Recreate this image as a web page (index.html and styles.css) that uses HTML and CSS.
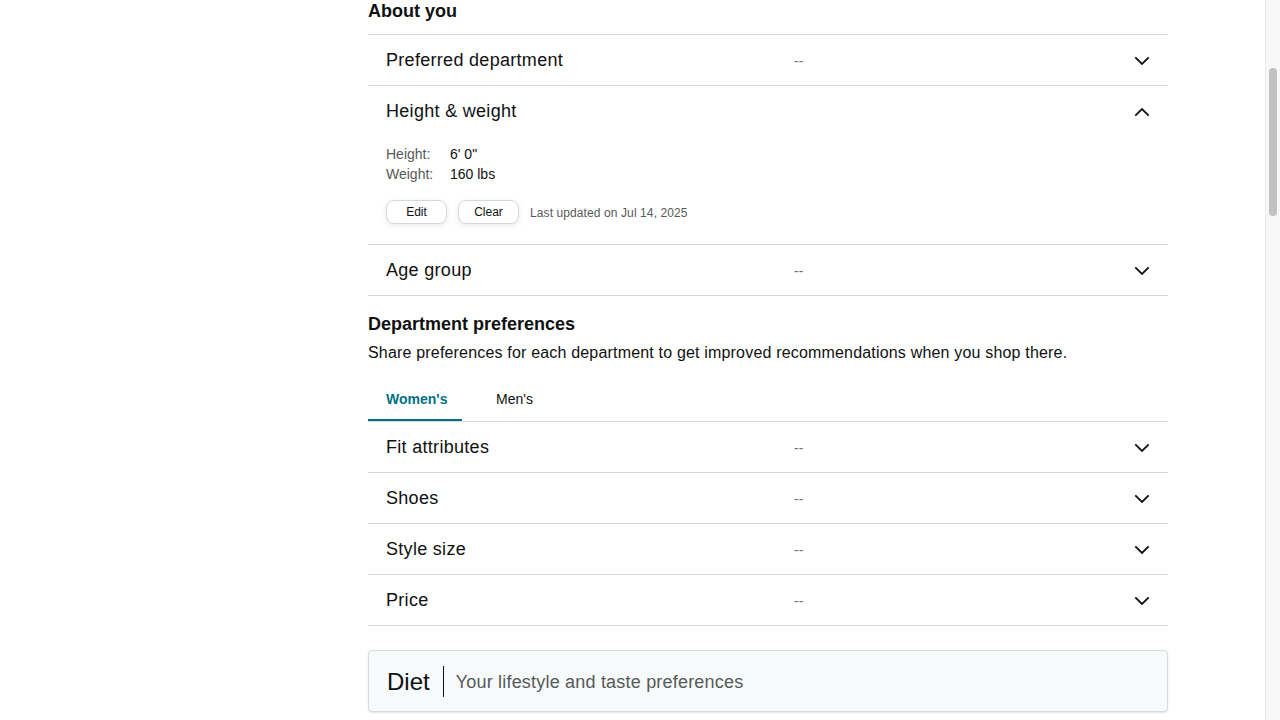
FILE: index.html
```html
<!DOCTYPE html>
<html lang="en">
<head>
<meta charset="utf-8">
<title>About you</title>
<link rel="stylesheet" href="styles.css">
</head>
<body>
<div class="page">
  <main class="main">
    <div class="column">
      <h2 class="section-title first">About you</h2>
      <div class="acc">
        <div class="acc-row">
          <div class="acc-head"><span class="acc-label">Preferred department</span><span class="acc-value">--</span>
            <svg class="chev" width="16" height="10" viewBox="0 0 16 10"><path d="M1.3 1.4 L8 8 L14.7 1.4" fill="none" stroke="#0f1111" stroke-width="1.8"/></svg></div>
        </div>
        <div class="acc-row">
          <div class="acc-head"><span class="acc-label">Height &amp; weight</span><span class="acc-value"></span>
            <svg class="chev" width="16" height="10" viewBox="0 0 16 10"><path d="M1.3 8.6 L8 2 L14.7 8.6" fill="none" stroke="#0f1111" stroke-width="1.8"/></svg></div>
          <div class="acc-body">
            <dl class="facts">
              <dt>Height:</dt><dd>6' 0"</dd>
              <dt>Weight:</dt><dd>160 lbs</dd>
            </dl>
            <div class="actions">
              <button class="btn">Edit</button>
              <button class="btn">Clear</button>
              <span class="updated">Last updated on Jul 14, 2025</span>
            </div>
          </div>
        </div>
        <div class="acc-row">
          <div class="acc-head"><span class="acc-label">Age group</span><span class="acc-value">--</span>
            <svg class="chev" width="16" height="10" viewBox="0 0 16 10"><path d="M1.3 1.4 L8 8 L14.7 1.4" fill="none" stroke="#0f1111" stroke-width="1.8"/></svg></div>
        </div>
      </div>

      <h2 class="section-title dept">Department preferences</h2>
      <p class="section-sub">Share preferences for each department to get improved recommendations when you shop there.</p>
      <div class="tabs">
        <span class="tab active">Women's</span>
        <span class="tab">Men's</span>
      </div>
      <div class="acc">
        <div class="acc-row">
          <div class="acc-head"><span class="acc-label">Fit attributes</span><span class="acc-value">--</span>
            <svg class="chev" width="16" height="10" viewBox="0 0 16 10"><path d="M1.3 1.4 L8 8 L14.7 1.4" fill="none" stroke="#0f1111" stroke-width="1.8"/></svg></div>
        </div>
        <div class="acc-row">
          <div class="acc-head"><span class="acc-label">Shoes</span><span class="acc-value">--</span>
            <svg class="chev" width="16" height="10" viewBox="0 0 16 10"><path d="M1.3 1.4 L8 8 L14.7 1.4" fill="none" stroke="#0f1111" stroke-width="1.8"/></svg></div>
        </div>
        <div class="acc-row">
          <div class="acc-head"><span class="acc-label">Style size</span><span class="acc-value">--</span>
            <svg class="chev" width="16" height="10" viewBox="0 0 16 10"><path d="M1.3 1.4 L8 8 L14.7 1.4" fill="none" stroke="#0f1111" stroke-width="1.8"/></svg></div>
        </div>
        <div class="acc-row">
          <div class="acc-head"><span class="acc-label">Price</span><span class="acc-value">--</span>
            <svg class="chev" width="16" height="10" viewBox="0 0 16 10"><path d="M1.3 1.4 L8 8 L14.7 1.4" fill="none" stroke="#0f1111" stroke-width="1.8"/></svg></div>
        </div>
      </div>

      <div class="diet">
        <span class="diet-title">Diet</span>
        <span class="diet-sep"></span>
        <span class="diet-sub">Your lifestyle and taste preferences</span>
      </div>
    </div>
  </main>
  <div class="scrollbar"><div class="thumb"></div></div>
</div>
</body>
</html>
```
FILE: styles.css
```css
* { box-sizing: border-box; }
html, body { margin: 0; padding: 0; height: 100%; overflow: hidden; background: #fff; }
body {
  font-family: "Liberation Sans", Arial, sans-serif;
  color: #0f1111;
}
.page { display: flex; height: 720px; }
.main { flex: 1; overflow: hidden; }
.column { width: 800px; margin-left: 368px; }

.section-title {
  margin: 0;
  font-size: 18px;
  line-height: 22px;
  font-weight: 700;
}
.section-title.first { padding-bottom: 12px; border-bottom: 1px solid #d5d9d9; }
.section-title.dept { margin-top: 17px; }
.section-sub { margin: 6px 0 0; font-size: 16px; line-height: 24px; letter-spacing: 0.18px; }

.acc-row { border-bottom: 1px solid #d5d9d9; }
.acc-head {
  display: flex;
  align-items: center;
  height: 50px;
  padding: 1px 18px 0;
}
.acc-label { width: 408px; font-size: 18px; letter-spacing: 0.3px; }
.acc-value { flex: 1; font-size: 14px; color: #6f7373; }
.chev { display: block; }

.acc-body { padding: 8px 18px 20px; }
.facts {
  display: grid;
  grid-template-columns: 64px auto;
  margin: 0;
  font-size: 14px;
  line-height: 20px;
}
.facts dt { color: #565959; }
.facts dd { margin: 0; }
.actions { display: flex; align-items: center; gap: 11px; margin-top: 16px; }
.btn {
  width: 61px;
  height: 24px;
  padding: 0;
  font-family: inherit;
  font-size: 12px;
  color: #0f1111;
  background: #fff;
  border: 1px solid #d5d9d9;
  border-radius: 8px;
  box-shadow: 0 2px 5px rgba(213, 217, 217, 0.5);
}
.updated { font-size: 12px; color: #565959; letter-spacing: 0.1px; padding-top: 1px; }

.tabs {
  display: flex;
  gap: 16px;
  margin-top: 11px;
  border-bottom: 1px solid #d5d9d9;
}
.tab {
  padding: 13px 18px 10px;
  font-size: 14px;
  line-height: 20px;
  border-bottom: 2px solid transparent;
}
.tab.active { width: 94px; color: #007185; font-weight: 700; border-bottom-color: #007185; }

.diet {
  display: flex;
  align-items: center;
  height: 62px;
  margin-top: 24px;
  padding: 0 18px;
  background: #f7fafa;
  border: 1px solid #d5d9d9;
  border-radius: 4px;
  box-shadow: 0 1px 2px rgba(15, 17, 17, 0.12);
}
.diet-title { font-size: 24px; padding-top: 2px; }
.diet-sep { width: 1px; height: 31px; background: #0f1111; margin: 0 12px 0 13px; }
.diet-sub { font-size: 18px; color: #565959; letter-spacing: 0.2px; padding-top: 2px; }

.scrollbar {
  width: 15px;
  background: #f8f8f8;
  border-left: 1px solid #ebebeb;
}
.thumb {
  width: 8px;
  height: 148px;
  margin: 68px 0 0 3px;
  background: #c1c1c1;
  border-radius: 4px;
}
```
